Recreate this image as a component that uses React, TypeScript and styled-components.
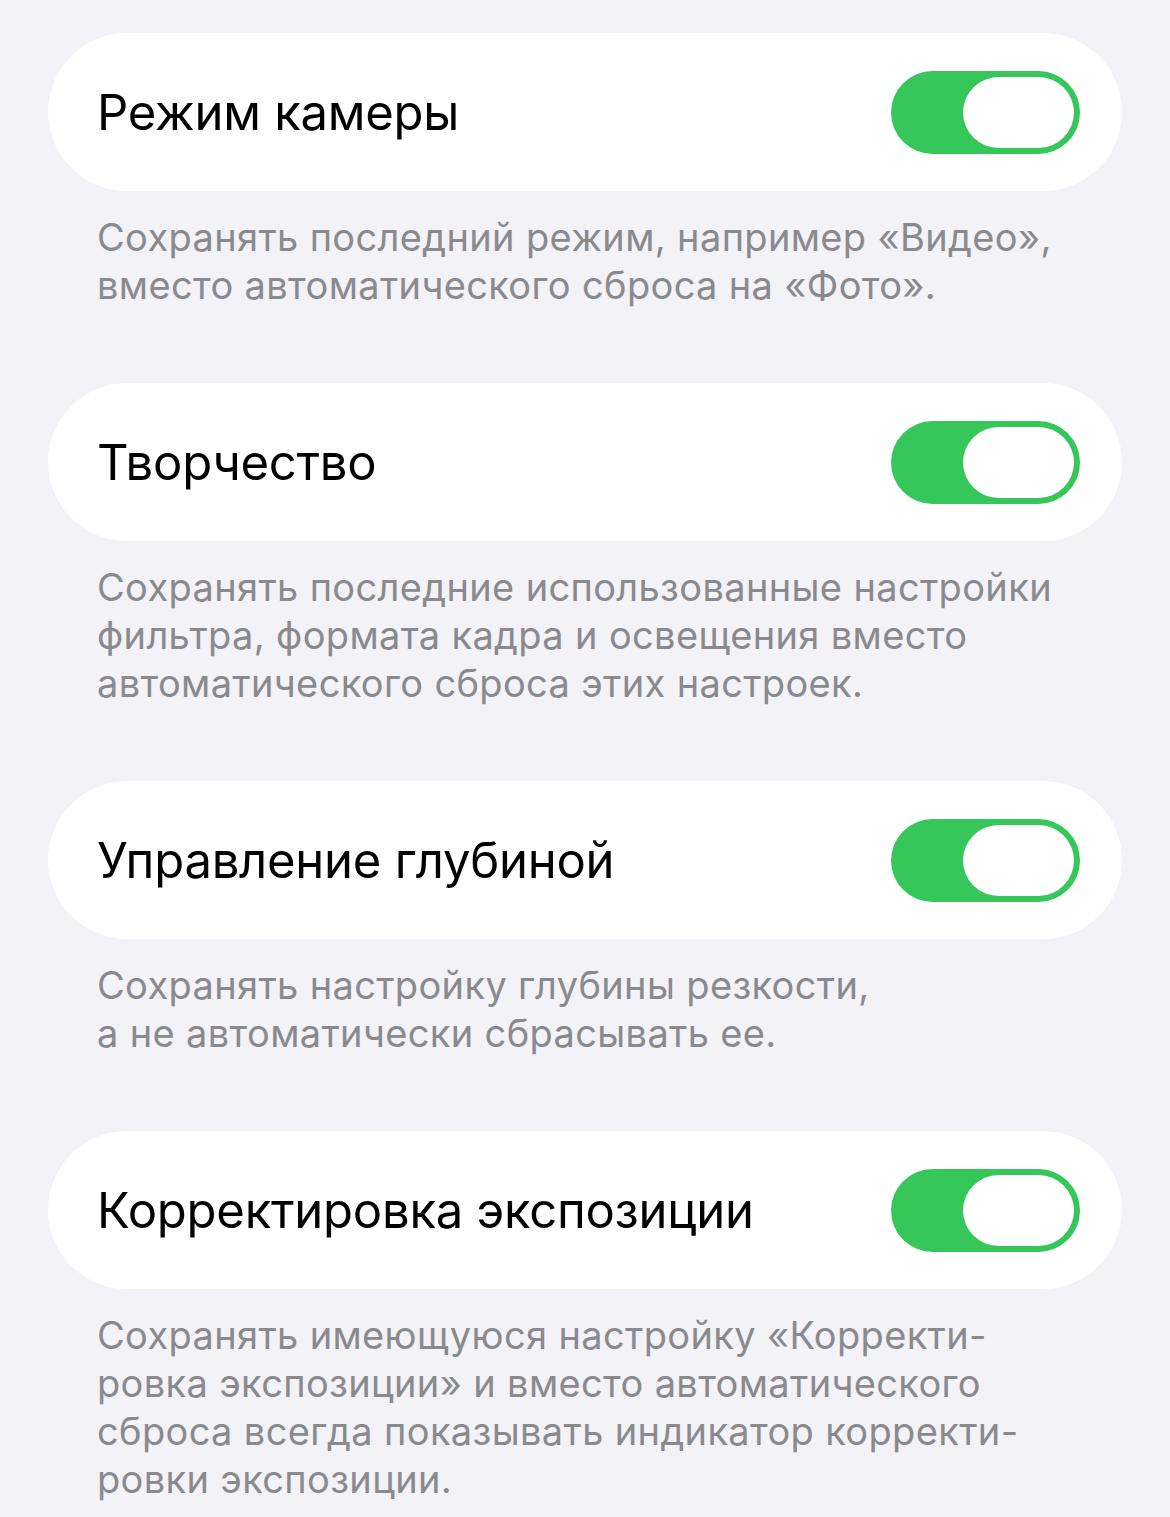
import React from 'react'
import styled, { createGlobalStyle } from 'styled-components'

const GlobalStyle = createGlobalStyle`
  html, body {
    margin: 0;
    padding: 0;
    background: #f2f2f7;
  }
  body {
    font-family: Inter, "Noto Sans", "Liberation Sans", sans-serif;
    -webkit-font-smoothing: antialiased;
  }
`

const Page = styled.div`
  width: 1170px;
  min-height: 1517px;
  box-sizing: border-box;
  padding: 33px 48px 0;
  background: #f2f2f7;
`

const Section = styled.section`
  margin-bottom: 74px;
`

const Card = styled.div`
  height: 158px;
  box-sizing: border-box;
  display: flex;
  align-items: center;
  justify-content: space-between;
  padding: 0 42px 0 49px;
  background: #ffffff;
  border-radius: 80px;
`

const Title = styled.span`
  font-size: 49px;
  font-weight: 400;
  color: #000000;
  letter-spacing: -0.25px;
`

const Toggle = styled.div<{ $on: boolean }>`
  width: 189px;
  height: 83px;
  box-sizing: border-box;
  padding: 6px;
  border-radius: 42px;
  display: flex;
  justify-content: ${(p) => (p.$on ? 'flex-end' : 'flex-start')};
  align-items: center;
  background: ${(p) => (p.$on ? '#36c75a' : '#e9e9eb')};
`

const Knob = styled.div`
  width: 111px;
  height: 71px;
  border-radius: 36px;
  background: #ffffff;
`

const Footer = styled.p`
  margin: 0;
  padding: 22px 49px 0;
  font-size: 38px;
  line-height: 48px;
  color: #8a8a8e;
  letter-spacing: 0.35px;
`

type Setting = {
  title: string
  lines: string[]
}

const settings: Setting[] = [
  {
    title: 'Режим камеры',
    lines: [
      'Сохранять последний режим, например «Видео»,',
      'вместо автоматического сброса на «Фото».',
    ],
  },
  {
    title: 'Творчество',
    lines: [
      'Сохранять последние использованные настройки',
      'фильтра, формата кадра и освещения вместо',
      'автоматического сброса этих настроек.',
    ],
  },
  {
    title: 'Управление глубиной',
    lines: [
      'Сохранять настройку глубины резкости,',
      'а не автоматически сбрасывать ее.',
    ],
  },
  {
    title: 'Корректировка экспозиции',
    lines: [
      'Сохранять имеющуюся настройку «Корректи-',
      'ровка экспозиции» и вместо автоматического',
      'сброса всегда показывать индикатор корректи-',
      'ровки экспозиции.',
    ],
  },
]

const App = () => {
  return (
    <>
      <GlobalStyle />
      <Page>
        {settings.map((s) => (
          <Section key={s.title}>
            <Card>
              <Title>{s.title}</Title>
              <Toggle $on>
                <Knob />
              </Toggle>
            </Card>
            <Footer>
              {s.lines.map((line, i) => (
                <React.Fragment key={i}>
                  {line}
                  {i < s.lines.length - 1 && <br />}
                </React.Fragment>
              ))}
            </Footer>
          </Section>
        ))}
      </Page>
    </>
  )
}

export default App
